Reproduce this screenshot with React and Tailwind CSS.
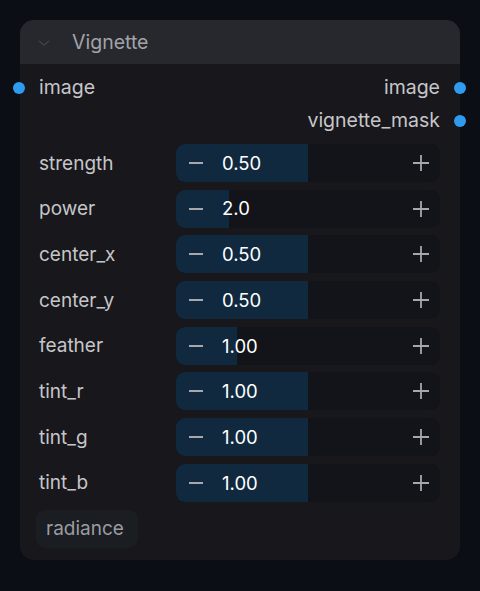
import React from 'react';

const params = [
  { name: 'strength', value: '0.50', pct: 50 },
  { name: 'power', value: '2.0', pct: 20 },
  { name: 'center_x', value: '0.50', pct: 50 },
  { name: 'center_y', value: '0.50', pct: 50 },
  { name: 'feather', value: '1.00', pct: 23 },
  { name: 'tint_r', value: '1.00', pct: 50 },
  { name: 'tint_g', value: '1.00', pct: 50 },
  { name: 'tint_b', value: '1.00', pct: 50 },
];

const Dot = () => <span className="w-[12px] h-[12px] rounded-full bg-[#2f9bf0] block" />;

const Slider = ({ value, pct }) => (
  <div className="relative w-[264px] h-[38px] rounded-[9px] bg-[#12141a] overflow-hidden">
    <div className="absolute left-0 top-0 bottom-0 bg-[#10293f]" style={{ width: `${pct}%` }} />
    <div className="relative flex items-center h-full">
      <svg width="16" height="16" viewBox="0 0 16 16" className="ml-[12px]">
        <line x1="1" y1="8" x2="15" y2="8" stroke="#a8a8ac" strokeWidth="1.8" />
      </svg>
      <span className="ml-[18px] text-[18.5px] text-white leading-none">{value}</span>
      <svg width="18" height="18" viewBox="0 0 18 18" className="ml-auto mr-[10px]">
        <line x1="1" y1="9" x2="17" y2="9" stroke="#a8a8ac" strokeWidth="1.8" />
        <line x1="9" y1="1" x2="9" y2="17" stroke="#a8a8ac" strokeWidth="1.8" />
      </svg>
    </div>
  </div>
);

export default function App() {
  return (
    <div
      className="w-[480px] h-[591px] bg-[#0b0e14] pt-[20px] pl-[20px]"
      style={{ fontFamily: 'Inter, "Noto Sans", sans-serif' }}
    >
      <div className="w-[440px] h-[540px] rounded-[14px] bg-[#18171b] relative">
        <div className="h-[44px] rounded-t-[14px] bg-[#27282e] flex items-center pt-[1px]">
          <svg width="14" height="10" viewBox="0 0 14 10" className="ml-[17px]">
            <polyline points="2,3 7,7 12,3" fill="none" stroke="#3e4048" strokeWidth="1.5" />
          </svg>
          <span className="ml-[21px] text-[19.5px] text-[#a3a3a8] leading-none">Vignette</span>
        </div>

        <div className="relative h-[48px] flex items-center">
          <span className="absolute left-[-7px]"><Dot /></span>
          <span className="ml-[19px] text-[19.5px] text-[#c6c6ca] leading-none">image</span>
          <span className="ml-auto mr-[20px] text-[19.5px] text-[#c6c6ca] leading-none">image</span>
          <span className="absolute right-[-6px]"><Dot /></span>
        </div>
        <div className="relative h-[18px] flex items-center">
          <span className="ml-auto mr-[20px] text-[19.5px] text-[#c6c6ca] leading-none">vignette_mask</span>
          <span className="absolute right-[-6px]"><Dot /></span>
        </div>

        <div className="mt-[14px] flex flex-col gap-[7.7px]">
          {params.map((p) => (
            <div key={p.name} className="flex items-center">
              <span className="ml-[19px] w-[137px] text-[19px] text-[#c6c6ca] leading-none">{p.name}</span>
              <Slider value={p.value} pct={p.pct} />
            </div>
          ))}
        </div>

        <div className="mt-[8px] ml-[16px] w-[102px] h-[38px] rounded-[9px] bg-[#1a1d22] flex items-center">
          <span className="ml-[10px] text-[19px] text-[#9c9ca0] leading-none">radiance</span>
        </div>
      </div>
    </div>
  );
}
